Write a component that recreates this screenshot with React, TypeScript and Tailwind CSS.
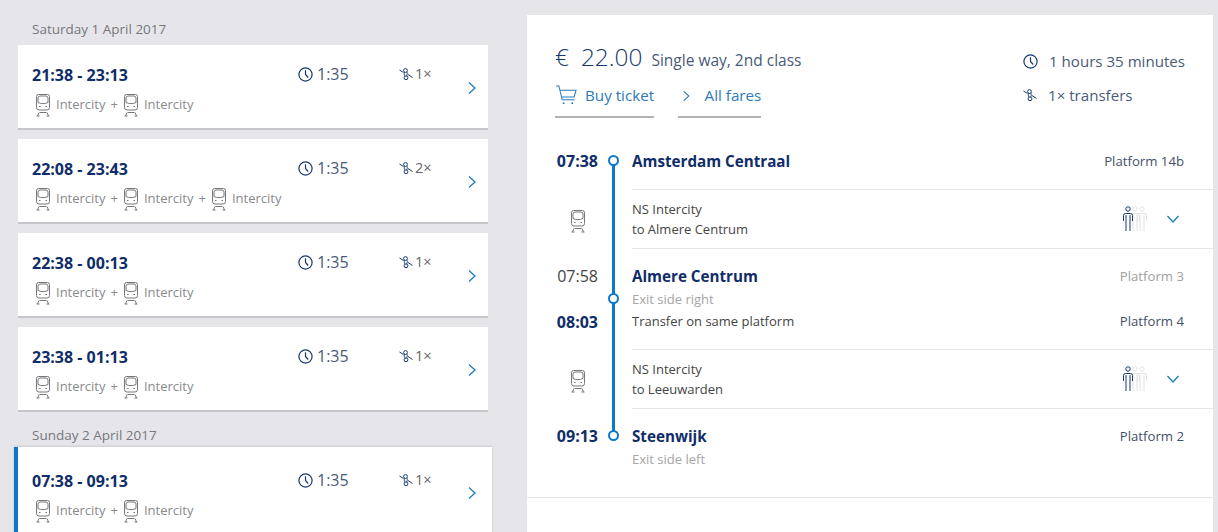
const font = "font-['Open_Sans','Noto_Sans',sans-serif]";

function TrainIcon({ className = "" }: { className?: string }) {
  return (
    <svg viewBox="0 0 16 24" width="16" height="24" fill="none" stroke="currentColor" strokeWidth="1" className={className}>
      <path d="M3.5 1.5h9a2 2 0 0 1 2 2v11a2.5 2.5 0 0 1-2.5 2.5H4a2.5 2.5 0 0 1-2.500-2.500v-11a2 2 0 0 1 2-2z" />
      <path d="M3 9.500V5a2 2 0 0 1 2-2h6a2 2 0 0 1 2 2v4.500c-3 1.500-7 1.500-10 0z" />
      <path d="M4 13.500h1.500M10.500 13.500H12" />
      <path d="M4.500 19.500h7M4 19.500 2.500 23M12 19.500l1.500 3.500M1.500 23h3M11.500 23h3" />
    </svg>
  );
}

function ClockIcon({ size = 15 }: { size?: number }) {
  return (
    <svg viewBox="0 0 15 15" width={size} height={size} fill="none" stroke="#16386e" strokeWidth="1.200">
      <circle cx="7.500" cy="7.500" r="6.600" />
      <path d="M7.500 3.200v4.300l2.700 3" />
    </svg>
  );
}

function TransferIcon({ size = 14 }: { size?: number }) {
  return (
    <svg viewBox="0 0 14 14" width={size} height={size} fill="none" stroke="#16386e" strokeWidth="1">
      <circle cx="6.500" cy="3.500" r="1.900" />
      <circle cx="7" cy="10.800" r="1.900" />
      <path d="M5.500 5.200C4.800 7 5.500 8 6 9.100M8 5.200c.5 1.500.2 3-.5 3.900M.5 3 4.500 5.500M9 7.500l4.500 3" />
    </svg>
  );
}

function Chevron({ size = 14, className = "" }: { size?: number; className?: string }) {
  return (
    <svg viewBox="0 0 10 14" width={size * 10 / 14} height={size} fill="none" stroke="currentColor" strokeWidth="1.300" className={className}>
      <path d="M2 1.500 8 7l-6 5.500" />
    </svg>
  );
}

function Person({ color, className = "" }: { color: string; className?: string }) {
  return (
    <svg viewBox="0 0 12 26" width="12" height="26" fill="none" stroke={color} strokeWidth="1" className={className}>
      <circle cx="6" cy="3" r="2.200" />
      <path d="M1.500 15V9.500a2 2 0 0 1 2-2h5a2 2 0 0 1 2 2V15M4 9v16M8 9v16" />
    </svg>
  );
}

function People() {
  return (
    <div className="flex">
      <Person color="#16386e" className="relative z-10" />
      <Person color="#e0e2e6" className="-ml-[5px]" />
      <Person color="#e0e2e6" className="-ml-[5px]" />
    </div>
  );
}

function TripCard({ time, duration, transfers, trains, selected }: { time: string; duration: string; transfers: string; trains: number; selected?: boolean }) {
  return (
    <div className={selected ? "relative -mx-1 flex h-[100px] border-l-4 border-[#0b79c9] bg-white pl-[14px] pr-[18px] pt-[23px] shadow-[0_-1px_2px_rgba(0,0,0,0.12)]" : "relative flex h-[85px] border-b-2 border-[#c6c6ca] bg-white pl-[14px] pr-[14px] pt-[19px]"}>
      <div className="flex-1">
        <div className="text-[16px] font-bold leading-[22px] text-[#0f2d69]">{time}</div>
        <div className="mt-[7px] flex items-center pl-[3px] text-[13px] text-[#8a8a8e]">
          {Array.from({ length: trains }).map((_, i) => (
            <div key={i} className="flex items-center">
              {i > 0 && <span className="ml-[5px] mr-[5px]">+</span>}
              <TrainIcon className="mr-[5px] text-[#77777b]" />
              <span>Intercity</span>
            </div>
          ))}
        </div>
      </div>
      <div className={selected ? "absolute left-[280px] top-[23px] flex items-center gap-[4px] text-[16px] leading-[20px] text-[#4a5a78]" : "absolute left-[280px] top-[19px] flex items-center gap-[4px] text-[16px] leading-[20px] text-[#4a5a78]"}>
        <ClockIcon />
        {duration}
      </div>
      <div className={selected ? "absolute left-[381px] top-[23px] flex items-center gap-[2px] text-[14.500px] leading-[20px] text-[#66666c]" : "absolute left-[381px] top-[19px] flex items-center gap-[2px] text-[14.500px] leading-[20px] text-[#66666c]"}>
        <TransferIcon />
        {transfers}
      </div>
      <Chevron className={selected ? "absolute right-[15px] top-[39px] text-[#1f7db8]" : "absolute right-[11px] top-[36px] text-[#1f7db8]"} />
    </div>
  );
}

function DateLabel({ children, className = "" }: { children: string; className?: string }) {
  return <div className={`pl-[14px] text-[13.500px] leading-[20px] text-[#77777d] ${className}`}>{children}</div>;
}

function Stop({ time, name, platform, sub, muted, dot = true }: { time: string; name: string; platform: string; sub?: string; muted?: boolean; dot?: boolean }) {
  return (
    <div className="relative flex">
      <div className={muted ? "w-[71px] text-right text-[16px] leading-[22px] text-[#444]" : "w-[71px] text-right text-[16px] font-bold leading-[22px] text-[#0f2d69]"}>{time}</div>
      <div className="relative w-[34px]">
        {dot && <div className="absolute left-[10px] top-[5px] z-10 size-[11px] rounded-full border-2 border-[#0b79c9] bg-white" />}
      </div>
      <div className="flex-1">
        <div className="flex items-center justify-between">
          <span className="text-[15.200px] font-bold leading-[22px] text-[#0f2d69]">{name}</span>
          <span className={muted ? "pt-[1px] text-[13.200px] text-[#a0a0a0]" : "pt-[1px] text-[13.200px] text-[#44506a]"}>{platform}</span>
        </div>
        {sub && <div className="mt-[2px] text-[13px] leading-[20px] text-[#a5a5a5]">{sub}</div>}
      </div>
    </div>
  );
}

function Leg({ to }: { to: string }) {
  return (
    <div className="flex items-center">
      <div className="flex w-[71px] justify-end pl-[14px] pr-[12px] pt-[3px]">
        <TrainIcon className="text-[#77777b]" />
      </div>
      <div className="w-[34px]" />
      <div className="flex h-[60px] flex-1 items-center justify-between border-y border-[#e6e6ea] pr-[35px] text-[13px] leading-[20px] text-[#444]">
        <div>
          <div>NS Intercity</div>
          <div>to {to}</div>
        </div>
        <div className="flex items-center gap-[20px]">
          <People />
          <Chevron size={14} className="rotate-90 text-[#1f7db8]" />
        </div>
      </div>
    </div>
  );
}

export default function App() {
  return (
    <div className={`${font} flex h-[532px] w-[1218px] overflow-hidden bg-[#e6e6ea] pt-[15px]`}>
      <div className="-mt-[1px] ml-[18px] w-[470px] shrink-0">
        <DateLabel className="h-[31px] pt-[5px]">Saturday 1 April 2017</DateLabel>
        <div className="flex flex-col gap-[9px]">
          <TripCard time="21:38 - 23:13" duration="1:35" transfers="1×" trains={2} />
          <TripCard time="22:08 - 23:43" duration="1:35" transfers="2×" trains={3} />
          <TripCard time="22:38 - 00:13" duration="1:35" transfers="1×" trains={2} />
          <TripCard time="23:38 - 01:13" duration="1:35" transfers="1×" trains={2} />
        </div>
        <DateLabel className="mt-[8px] h-[27px] pt-[5px]">Sunday 2 April 2017</DateLabel>
        <TripCard time="07:38 - 09:13" duration="1:35" transfers="1×" trains={2} selected />
      </div>

      <div className="ml-[39px] h-[600px] w-[686px] shrink-0 bg-white">
        <div className="flex justify-between pl-[28px] pr-[28px] pt-[25px]">
          <div>
            <div className="flex items-baseline whitespace-nowrap text-[#16386e]">
              <span className="text-[24.400px] font-light leading-[34px]">€</span>
              <span className="ml-[12px] text-[24.400px] font-light leading-[34px]">22.00</span>
              <span className="ml-[9px] text-[15.500px] text-[#4a5a78]">Single way, 2nd class</span>
            </div>
            <div className="mt-[11px] flex gap-[24px] whitespace-nowrap text-[15.200px] text-[#2e7ab8]">
              <div className="flex h-[33px] w-[99px] items-start gap-[7px] border-b-2 border-[#b4b4b8]">
                <svg viewBox="0 0 24 22" width="23" height="21" fill="none" stroke="currentColor" strokeWidth="1.100" className="shrink-0">
                  <path d="M1 1h3l3.500 14.500h13M5 5.500h17l-2 7H6.500" />
                  <circle cx="9" cy="19" r="1" fill="currentColor" stroke="none" />
                  <circle cx="18" cy="19" r="1" fill="currentColor" stroke="none" />
                </svg>
                <span className="leading-[20px]">Buy ticket</span>
              </div>
              <div className="flex h-[33px] w-[83px] items-start border-b-2 border-[#b4b4b8] pl-[4px]">
                <Chevron size={12} className="mt-[5px] shrink-0" />
                <span className="ml-[14px] leading-[20px]">All fares</span>
              </div>
            </div>
          </div>
          <div className="pt-[11px] text-[15.100px] text-[#4a5a78]">
            <div className="flex items-center gap-[11px] leading-[20px]"><ClockIcon />1 hours 35 minutes</div>
            <div className="mt-[14px] flex items-center gap-[11px] leading-[20px]"><TransferIcon />1× transfers</div>
          </div>
        </div>

        <div className="relative mt-[32px] pr-[29px]">
          <div className="absolute left-[85px] top-[11px] h-[275px] w-[3px] bg-[#0b79c9]" />
          <Stop time="07:38" name="Amsterdam Centraal" platform="Platform 14b" />
          <div className="mr-[-29px] mt-[17px]"><Leg to="Almere Centrum" /></div>
          <div className="mt-[16px]">
            <Stop time="07:58" name="Almere Centrum" platform="Platform 3" sub="Exit side right" muted dot={false} />
          </div>
          <div className="absolute left-[81px] top-[143px] z-10 size-[11px] rounded-full border-2 border-[#0b79c9] bg-white" />
          <div className="relative mt-[2px] flex text-[13px] text-[#444]">
            <div className="w-[71px] text-right text-[16px] font-bold leading-[22px] text-[#0f2d69]">08:03</div>
            <div className="w-[34px]" />
            <div className="flex flex-1 items-center justify-between">
              <span>Transfer on same platform</span>
              <span className="text-[13.200px] text-[#44506a]">Platform 4</span>
            </div>
          </div>
          <div className="mr-[-29px] mt-[16px]"><Leg to="Leeuwarden" /></div>
          <div className="mt-[16px]">
            <Stop time="09:13" name="Steenwijk" platform="Platform 2" sub="Exit side left" />
          </div>
        </div>

        <div className="mt-[28px] border-t border-[#e6e6ea]" />
      </div>
    </div>
  );
}
